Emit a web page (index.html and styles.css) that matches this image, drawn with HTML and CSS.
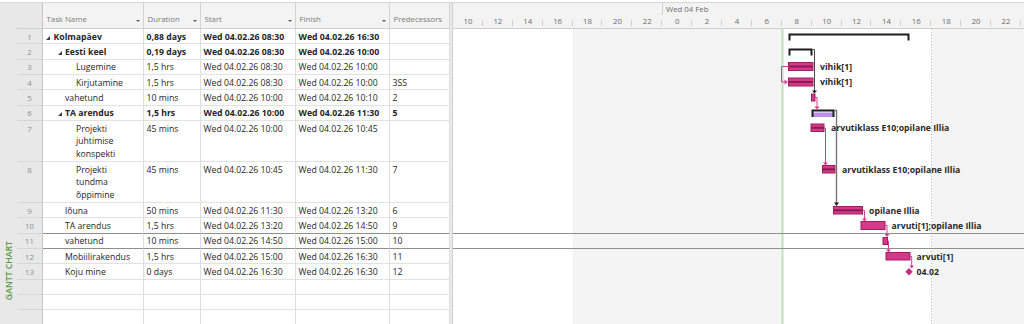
FILE: index.html
```html
<!DOCTYPE html>
<html lang="et">

<head>
    <meta charset="UTF-8">
    <meta name="viewport" content="width=device-width, initial-scale=1.0">
    <title>Gantt - Kolmapäev</title>
    <link rel="stylesheet" href="styles.css">
</head>

<body>

    <div class="app">
        <div class="viewbar"><span class="viewbar-label">GANTT CHART</span></div>

        <div class="sheet">
            <div class="row head">
                <div class="cell rn"></div>
                <div class="cell name">Task Name<i class="dd"></i></div>
                <div class="cell dur">Duration<i class="dd"></i></div>
                <div class="cell start">Start<i class="dd"></i></div>
                <div class="cell finish">Finish<i class="dd"></i></div>
                <div class="cell pred">Predecessors</div>
            </div>

            <div class="row bold">
                <div class="cell rn">1</div>
                <div class="cell name s1"><svg class="toggle" viewBox="0 0 4 4"><polygon points="4,0 4,4 0,4" /></svg>Kolmapäev</div>
                <div class="cell dur">0,88 days</div>
                <div class="cell start">Wed 04.02.26 08:30</div>
                <div class="cell finish">Wed 04.02.26 16:30</div>
                <div class="cell pred"></div>
            </div>
            <div class="row bold">
                <div class="cell rn">2</div>
                <div class="cell name s2"><svg class="toggle" viewBox="0 0 4 4"><polygon points="4,0 4,4 0,4" /></svg>Eesti keel</div>
                <div class="cell dur">0,19 days</div>
                <div class="cell start">Wed 04.02.26 08:30</div>
                <div class="cell finish">Wed 04.02.26 10:00</div>
                <div class="cell pred"></div>
            </div>
            <div class="row">
                <div class="cell rn">3</div>
                <div class="cell name l3">Lugemine</div>
                <div class="cell dur">1,5 hrs</div>
                <div class="cell start">Wed 04.02.26 08:30</div>
                <div class="cell finish">Wed 04.02.26 10:00</div>
                <div class="cell pred"></div>
            </div>
            <div class="row">
                <div class="cell rn">4</div>
                <div class="cell name l3">Kirjutamine</div>
                <div class="cell dur">1,5 hrs</div>
                <div class="cell start">Wed 04.02.26 08:30</div>
                <div class="cell finish">Wed 04.02.26 10:00</div>
                <div class="cell pred">3SS</div>
            </div>
            <div class="row">
                <div class="cell rn">5</div>
                <div class="cell name l2">vahetund</div>
                <div class="cell dur">10 mins</div>
                <div class="cell start">Wed 04.02.26 10:00</div>
                <div class="cell finish">Wed 04.02.26 10:10</div>
                <div class="cell pred">2</div>
            </div>
            <div class="row bold">
                <div class="cell rn">6</div>
                <div class="cell name s2"><svg class="toggle" viewBox="0 0 4 4"><polygon points="4,0 4,4 0,4" /></svg>TA arendus</div>
                <div class="cell dur">1,5 hrs</div>
                <div class="cell start">Wed 04.02.26 10:00</div>
                <div class="cell finish">Wed 04.02.26 11:30</div>
                <div class="cell pred">5</div>
            </div>
            <div class="row tall">
                <div class="cell rn">7</div>
                <div class="cell name l3"><span class="wrap">Projekti juhtimise konspekti</span></div>
                <div class="cell dur">45 mins</div>
                <div class="cell start">Wed 04.02.26 10:00</div>
                <div class="cell finish">Wed 04.02.26 10:45</div>
                <div class="cell pred"></div>
            </div>
            <div class="row tall">
                <div class="cell rn">8</div>
                <div class="cell name l3"><span class="wrap">Projekti tundma õppimine</span></div>
                <div class="cell dur">45 mins</div>
                <div class="cell start">Wed 04.02.26 10:45</div>
                <div class="cell finish">Wed 04.02.26 11:30</div>
                <div class="cell pred">7</div>
            </div>
            <div class="row">
                <div class="cell rn">9</div>
                <div class="cell name l2">lõuna</div>
                <div class="cell dur">50 mins</div>
                <div class="cell start">Wed 04.02.26 11:30</div>
                <div class="cell finish">Wed 04.02.26 13:20</div>
                <div class="cell pred">6</div>
            </div>
            <div class="row pre-sel">
                <div class="cell rn">10</div>
                <div class="cell name l2">TA arendus</div>
                <div class="cell dur">1,5 hrs</div>
                <div class="cell start">Wed 04.02.26 13:20</div>
                <div class="cell finish">Wed 04.02.26 14:50</div>
                <div class="cell pred">9</div>
            </div>
            <div class="row sel">
                <div class="cell rn">11</div>
                <div class="cell name l2">vahetund</div>
                <div class="cell dur">10 mins</div>
                <div class="cell start">Wed 04.02.26 14:50</div>
                <div class="cell finish">Wed 04.02.26 15:00</div>
                <div class="cell pred">10</div>
            </div>
            <div class="row">
                <div class="cell rn">12</div>
                <div class="cell name l2">Mobiilirakendus</div>
                <div class="cell dur">1,5 hrs</div>
                <div class="cell start">Wed 04.02.26 15:00</div>
                <div class="cell finish">Wed 04.02.26 16:30</div>
                <div class="cell pred">11</div>
            </div>
            <div class="row">
                <div class="cell rn">13</div>
                <div class="cell name l2">Koju mine</div>
                <div class="cell dur">0 days</div>
                <div class="cell start">Wed 04.02.26 16:30</div>
                <div class="cell finish">Wed 04.02.26 16:30</div>
                <div class="cell pred">12</div>
            </div>
            <div class="row">
                <div class="cell rn"></div><div class="cell name"></div><div class="cell dur"></div>
                <div class="cell start"></div><div class="cell finish"></div><div class="cell pred"></div>
            </div>
            <div class="row">
                <div class="cell rn"></div><div class="cell name"></div><div class="cell dur"></div>
                <div class="cell start"></div><div class="cell finish"></div><div class="cell pred"></div>
            </div>
            <div class="row">
                <div class="cell rn"></div><div class="cell name"></div><div class="cell dur"></div>
                <div class="cell start"></div><div class="cell finish"></div><div class="cell pred"></div>
            </div>
        </div>

        <div class="splitter"></div>

        <div class="chart">
            <div class="timescale">
                <div class="tier-top">
                    <div class="prev-day"></div>
                    <div class="day">Wed 04 Feb</div>
                </div>
                <div class="tier-bottom">
                    <span class="tick">10</span><span class="tick">12</span><span class="tick">14</span>
                    <span class="tick">16</span><span class="tick">18</span><span class="tick">20</span>
                    <span class="tick">22</span><span class="tick">0</span><span class="tick">2</span>
                    <span class="tick">4</span><span class="tick">6</span><span class="tick">8</span>
                    <span class="tick">10</span><span class="tick">12</span><span class="tick">14</span>
                    <span class="tick">16</span><span class="tick">18</span><span class="tick">20</span>
                    <span class="tick">22</span>
                </div>
            </div>

            <svg class="chart-body" viewBox="453 29 571 295" width="571" height="295">
                <rect x="572.6" y="29" width="209.3" height="295" class="nonwork" />
                <rect x="931.4" y="29" width="93" height="295" class="nonwork" />
                <line x1="931.5" y1="29" x2="931.5" y2="324" class="finish-line" />
                <rect x="781.5" y="29" width="2" height="295" class="start-line" />
                <line x1="453" y1="233.5" x2="1024" y2="233.5" class="sel-line" />
                <line x1="453" y1="248.5" x2="1024" y2="248.5" class="sel-line" />

                <!-- 1 Kolmapäev -->
                <path class="summary" d="M788.5 33.5 H909.5 V40.5 H907.5 V35.5 H790.5 V40.5 H788.5 Z" />

                <!-- 2 Eesti keel -->
                <path class="summary" d="M788.5 48.5 H812.5 V55.5 H810.5 V50.5 H790.5 V55.5 H788.5 Z" />
                <path class="link dark" d="M812.5 49.5 H814.5 V91" />
                <polygon class="arrow dark" points="812,90.5 817,90.5 814.5,93.5" />

                <!-- 3 Lugemine -->
                <rect class="bar" x="788.5" y="62.5" width="24.5" height="8" />
                <rect class="bar-mid" x="789" y="65.5" width="23.5" height="2" />
                <text class="lbl" x="820" y="69.5">vihik[1]</text>
                <path class="link" d="M788.5 66.5 H781.5 V82 H785" />
                <polygon class="arrow" points="784.5,79.5 788,82 784.5,84.5" />

                <!-- 4 Kirjutamine -->
                <rect class="bar" x="788.5" y="78" width="24.5" height="8" />
                <rect class="bar-mid" x="789" y="81" width="23.5" height="2" />
                <text class="lbl" x="820" y="85">vihik[1]</text>

                <!-- 5 vahetund -->
                <rect class="bar" x="811.5" y="94" width="3.5" height="7" />
                <path class="link" d="M815 97.5 H817 V107" />
                <polygon class="arrow" points="814.5,106.5 819.5,106.5 817,109.5" />

                <!-- 6 TA arendus -->
                <rect class="progress" x="813" y="112.5" width="20" height="4.5" />
                <path class="summary" d="M811.5 109.5 H834.5 V117 H832.5 V111.5 H813.5 V117 H811.5 Z" />
                <path class="link grey" d="M834.5 110.5 H836.5 V203" />
                <polygon class="arrow dark" points="834,202.5 839,202.5 836.5,206" />

                <!-- 7 Projekti juhtimise konspekti -->
                <rect class="bar" x="811" y="124" width="13" height="7.5" />
                <rect class="bar-mid" x="811.5" y="126.8" width="12" height="2" />
                <text class="lbl" x="831" y="131">arvutiklass E10;opilane Illia</text>
                <path class="link" d="M824 128 H825.5 V163" />
                <polygon class="arrow" points="823,162.5 828,162.5 825.5,165.5" />

                <!-- 8 Projekti tundma õppimine -->
                <rect class="bar" x="822.5" y="165.5" width="12.5" height="7.5" />
                <rect class="bar-mid" x="823" y="168.3" width="11.5" height="2" />
                <text class="lbl" x="842" y="172.5">arvutiklass E10;opilane Illia</text>

                <!-- 9 lõuna -->
                <rect class="bar" x="833.5" y="206.5" width="29" height="7.5" />
                <rect class="bar-mid" x="834" y="209.3" width="28" height="2" />
                <text class="lbl" x="869" y="213.5">opilane Illia</text>
                <path class="link" d="M862.5 210.5 H864.5 V219" />
                <polygon class="arrow" points="862,218.5 867,218.5 864.5,221.5" />

                <!-- 10 TA arendus -->
                <rect class="bar" x="861" y="221.5" width="24" height="8" />
                <text class="lbl" x="891.5" y="228.7">arvuti[1];opilane Illia</text>
                <path class="link" d="M885 225.5 H887 V234.5" />
                <polygon class="arrow" points="884.5,234 889.5,234 887,237" />

                <!-- 11 vahetund -->
                <rect class="bar" x="883" y="237.5" width="4.5" height="7" />
                <path class="link" d="M887.5 241 H888.5 V250" />
                <polygon class="arrow" points="886,249.5 891,249.5 888.5,252.5" />

                <!-- 12 Mobiilirakendus -->
                <rect class="bar" x="886" y="252.5" width="24" height="7.5" />
                <text class="lbl" x="916.5" y="259.5">arvuti[1]</text>
                <path class="link" d="M910 256.5 H911.7 V266" />
                <polygon class="arrow" points="909.2,265.5 914.2,265.5 911.7,268.5" />

                <!-- 13 Koju mine -->
                <polygon class="milestone" points="909,268 912.7,271.7 909,275.4 905.3,271.7" />
                <text class="lbl" x="916.5" y="275">04.02</text>
            </svg>
        </div>
    </div>

</body>

</html>
```

FILE: styles.css
```css
* {
    box-sizing: border-box;
}

body {
    margin: 0;
    font-family: "Open Sans", "Noto Sans", sans-serif;
    font-size: 8.7px;
    color: #262626;
    background-color: #fff;
}

.app {
    display: flex;
    height: 322px;
    margin-top: 2px;
    border-top: 1px solid #d6d6d6;
    overflow: hidden;
}

/* vertical view name on the left */
.viewbar {
    width: 17px;
    flex-shrink: 0;
    background-color: #e8e8e8;
    display: flex;
    flex-direction: column;
    justify-content: flex-end;
    align-items: center;
    padding-bottom: 24px;
}

.viewbar-label {
    writing-mode: vertical-rl;
    transform: rotate(180deg);
    color: #5b9a46;
    font-weight: 600;
    font-size: 8.7px;
}

/* task sheet */
.sheet {
    width: 433px;
    flex-shrink: 0;
}

.row {
    display: flex;
    height: 15.35px;
}

.row.tall {
    height: 41px;
}

.row.bold {
    font-weight: 700;
}

.cell {
    border-right: 1px solid #dedede;
    border-bottom: 1px solid #e2e2e2;
    padding: 1.5px 2.5px 0;
    line-height: 12.5px;
    white-space: nowrap;
    overflow: hidden;
}

.rn {
    width: 26px;
    background-color: #e8e8e8;
    text-align: center;
    color: #8e8e8e;
    font-size: 7.8px;
    font-weight: 400;
    padding: 1.5px 0 0;
    border-right-color: #c6c6c6;
    border-bottom-color: #d6d6d6;
}

.name {
    width: 101px;
}

.dur {
    width: 57px;
}

.start {
    width: 95px;
}

.finish {
    width: 94px;
}

.pred {
    width: 60px;
}

.name.s1 {
    padding-left: 3px;
}

.name.s2 {
    padding-left: 14.5px;
}

.name.l2 {
    padding-left: 22px;
}

.name.l3 {
    padding-left: 33px;
}

.toggle {
    display: inline-block;
    width: 4px;
    height: 4px;
    margin-right: 3.5px;
    vertical-align: 0;
    fill: #3c3c3c;
}

.wrap {
    display: inline-block;
    width: 58px;
    white-space: normal;
}

.row.head {
    height: 26px;
    background-color: #f3f3f3;
}

.head .cell {
    display: flex;
    align-items: flex-end;
    padding: 0 3.5px 4px;
    color: #7a7a7a;
    font-size: 7.8px;
    line-height: 10px;
    border-right-color: #d4d4d4;
    border-bottom-color: #cfcfcf;
}

.head .rn {
    background-color: #e8e8e8;
    border-right-color: #c6c6c6;
}

.dd {
    margin-left: auto;
    margin-bottom: 2.5px;
    border-left: 2.5px solid transparent;
    border-right: 2.5px solid transparent;
    border-top: 2.5px solid #5c5c5c;
}

.row.pre-sel .cell:not(.rn),
.row.sel .cell:not(.rn) {
    border-bottom-color: #8f8f8f;
}

.splitter {
    width: 3px;
    flex-shrink: 0;
    background-color: #ebebeb;
    border-right: 1px solid #cdcdcd;
}

/* gantt chart */
.chart {
    flex: 1;
    overflow: hidden;
}

.timescale {
    height: 26px;
    background-color: #f3f3f3;
    border-bottom: 1px solid #cfcfcf;
    color: #6b6b6b;
    font-size: 7.8px;
}

.tier-top {
    display: flex;
    height: 12px;
}

.prev-day {
    width: 210px;
    border-right: 1px solid #d2d2d2;
}

.day {
    padding: 1px 0 0 3px;
    line-height: 11px;
}

.tier-bottom {
    display: grid;
    grid-template-columns: repeat(19, 29.9px);
    height: 13px;
}

.tick {
    position: relative;
    text-align: center;
    line-height: 12px;
}

.tick::after {
    content: "";
    position: absolute;
    right: 0;
    bottom: 2px;
    height: 6px;
    border-right: 1px solid #d0d0d0;
}

.chart-body {
    display: block;
}

.nonwork {
    fill: #f4f4f4;
}

.finish-line {
    stroke: #bdbdbd;
    stroke-dasharray: 1 2;
}

.start-line {
    fill: #c2e0bb;
}

.sel-line {
    stroke: #8f8f8f;
}

.summary {
    fill: #1e1e1e;
}

.progress {
    fill: #bb8fe8;
}

.bar {
    fill: #d23b8b;
    stroke: #a31d5d;
    stroke-width: 1;
}

.bar-mid {
    fill: #8c1a4f;
}

.milestone {
    fill: #c32f7e;
}

.link {
    fill: none;
    stroke: #d4428f;
    stroke-width: 1;
}

.link.dark {
    stroke: #4a4a4a;
}

.link.grey {
    stroke: #777;
    stroke-width: 1.4;
}

.arrow {
    fill: #d4428f;
}

.arrow.dark {
    fill: #1e1e1e;
}

.lbl {
    font-family: "Open Sans", "Noto Sans", sans-serif;
    font-size: 8.7px;
    font-weight: 700;
    fill: #2a2a2a;
}
```
